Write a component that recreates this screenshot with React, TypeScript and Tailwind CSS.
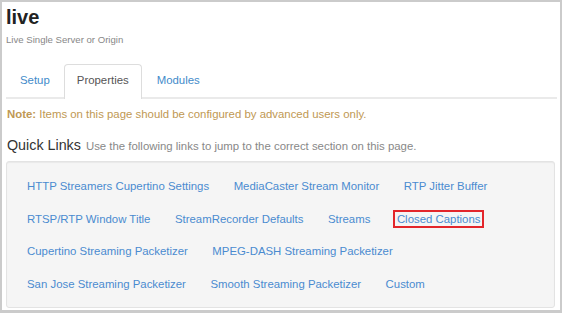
import React from "react";

const links = [
  "HTTP Streamers Cupertino Settings",
  "MediaCaster Stream Monitor",
  "RTP Jitter Buffer",
  "RTSP/RTP Window Title",
  "StreamRecorder Defaults",
  "Streams",
  "Closed Captions",
  "Cupertino Streaming Packetizer",
  "MPEG-DASH Streaming Packetizer",
  "San Jose Streaming Packetizer",
  "Smooth Streaming Packetizer",
  "Custom",
];

export default function App() {
  return (
    <div className="w-[562px] h-[313px] overflow-hidden bg-white border-2 border-b-[3px] border-[#cbcbcb] font-['Liberation_Sans',Arial,sans-serif]">
      <div className="px-1">
        {/* Header */}
        <h1 className="pt-[3px] text-[20px] leading-[24px] font-bold text-[#222]">live</h1>
        <p className="mt-[5px] text-[9.6px] leading-[12px] text-[#888]">Live Single Server or Origin</p>

        {/* Tabs */}
        <div className="mt-[18px] flex border-b-2 border-[#eaeaea] mr-[-1px] text-[11.4px] leading-[13px]">
          <a className="px-[13px] py-[9px] text-[#428bca] border border-transparent">Setup</a>
          <a className="-mb-[2px] px-[12px] pt-[9px] pb-[11px] text-[#555] bg-white border border-b-0 border-[#ddd] rounded-t-[4px]">
            Properties
          </a>
          <a className="px-[14px] py-[9px] text-[#428bca] border border-transparent">Modules</a>
        </div>

        {/* Note */}
        <p className="mt-[8px] ml-[1px] text-[11.4px] leading-[14px] text-[#c09853]">
          <span className="font-bold">Note:</span> Items on this page should be configured by advanced users only.
        </p>

        {/* Quick links */}
        <div className="mt-[15px] ml-[1px] flex items-baseline gap-[5px]">
          <span className="text-[14.3px] leading-[18px] text-[#333]">Quick Links</span>
          <span className="text-[11.4px] text-[#888]">Use the following links to jump to the correct section on this page.</span>
        </div>

        <div className="mt-[6px] mr-[1px] rounded-[3px] border border-[#e3e3e3] bg-[#f5f5f5] px-[20px] pt-[8px] pb-[7px] shadow-[inset_0_1px_1px_rgba(0,0,0,0.05)]">
          <div className="flex flex-wrap gap-x-[24.5px] text-[11.4px] leading-[32.6px]">
            {links.map((l) => (
              <a key={l} className="text-[#4a8bd0]">
                <span
                  className={
                    l === "Closed Captions"
                      ? "px-[2px] py-[1px] -mx-[2px] border-2 border-[#e3262b]"
                      : ""
                  }
                >
                  {l}
                </span>
              </a>
            ))}
          </div>
        </div>
      </div>
    </div>
  );
}
